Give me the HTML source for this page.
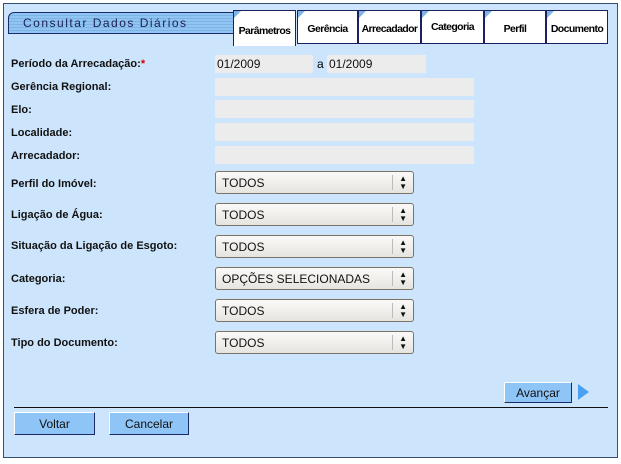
<!DOCTYPE html>
<html><head><meta charset="utf-8"><style>
*{margin:0;padding:0;box-sizing:border-box}
body{width:621px;height:464px;background:#fff;position:relative;overflow:hidden;font-family:"Liberation Sans",sans-serif}
.frame{position:absolute;left:3px;top:3px;width:615px;height:455px;background:#cce5fc;border:1px solid #354f73}
.a{position:absolute}
.title{left:8px;top:12px;width:226px;height:22px;border:1px solid #1a2a6a;border-radius:6px 0 0 0;background:repeating-linear-gradient(#90c4f2 0 2px,#7fb3e6 2px 3px);font-size:12px;letter-spacing:1.5px;color:#1a2050;padding:3px 0 0 14px}
.tab{top:10px;height:34px;background:#fff;border:1px solid #1a2060;font-size:10.5px;letter-spacing:-0.6px;font-weight:bold;color:#000;text-align:center;padding-top:12px;overflow:hidden;white-space:nowrap}
.tab:before{content:"";position:absolute;left:0;top:0;border-top:7px solid #7fb3e6;border-right:7px solid transparent}
.lbl{left:11px;font-size:11px;font-weight:bold;color:#111}
.inp{background:#ececec;height:18px;font-size:12px;padding:2px 0 0 2px;color:#111}
.sel{left:215px;width:199px;height:23px;border:1px solid #7a7468;border-radius:3px;background:linear-gradient(#fafaf8,#e6e4df);font-size:12px;padding:4px 0 0 6px;color:#111}
.sel:after{content:"";position:absolute;right:20px;top:3px;height:15px;border-left:1px solid #bbb}
.sel i{position:absolute;right:6px;top:3px;font-style:normal;font-size:8px;line-height:8px}
.btn{background:#8ec4f6;border:1px solid;border-color:#fff #1a2a6a #1a2a6a #fff;font-size:12px;color:#111;text-align:center}
</style></head><body>
<div class="frame"></div>
<div class="a title">Consultar Dados Diários</div>
<div class="a tab" style="left:233px;width:63px;height:36px;border-bottom:none;padding-top:14px">Parâmetros</div>
<div class="a tab" style="left:297px;width:61px">Gerência</div>
<div class="a tab" style="left:358px;width:63px">Arrecadador</div>
<div class="a tab" style="left:421px;width:63px;padding-top:10px">Categoria</div>
<div class="a tab" style="left:484px;width:62px">Perfil</div>
<div class="a tab" style="left:546px;width:62px">Documento</div>

<div class="a lbl" style="top:58px">Período da Arrecadação:<span style="color:#d00">*</span></div>
<div class="a lbl" style="top:81px">Gerência Regional:</div>
<div class="a lbl" style="top:104px">Elo:</div>
<div class="a lbl" style="top:127px">Localidade:</div>
<div class="a lbl" style="top:150px">Arrecadador:</div>
<div class="a lbl" style="top:178px">Perfil do Imóvel:</div>
<div class="a lbl" style="top:209px">Ligação de Água:</div>
<div class="a lbl" style="top:240px">Situação da Ligação de Esgoto:</div>
<div class="a lbl" style="top:273px">Categoria:</div>
<div class="a lbl" style="top:305px">Esfera de Poder:</div>
<div class="a lbl" style="top:337px">Tipo do Documento:</div>

<div class="a inp" style="left:215px;top:55px;width:98px">01/2009</div>
<div class="a" style="left:317px;top:57px;font-size:12px">a</div>
<div class="a inp" style="left:327px;top:55px;width:99px">01/2009</div>
<div class="a inp" style="left:215px;top:78px;width:259px"></div>
<div class="a inp" style="left:215px;top:100px;width:259px"></div>
<div class="a inp" style="left:215px;top:123px;width:259px"></div>
<div class="a inp" style="left:215px;top:146px;width:259px"></div>

<div class="a sel" style="top:171px">TODOS<i>▲<br>▼</i></div>
<div class="a sel" style="top:203px">TODOS<i>▲<br>▼</i></div>
<div class="a sel" style="top:235px">TODOS<i>▲<br>▼</i></div>
<div class="a sel" style="top:267px">OPÇÕES SELECIONADAS<i>▲<br>▼</i></div>
<div class="a sel" style="top:299px">TODOS<i>▲<br>▼</i></div>
<div class="a sel" style="top:331px">TODOS<i>▲<br>▼</i></div>

<div class="a btn" style="left:504px;top:382px;width:68px;height:21px;padding-top:3px">Avançar</div>
<div class="a" style="left:578px;top:384px;border-left:11px solid #4aa0f0;border-top:8px solid transparent;border-bottom:8px solid transparent"></div>
<div class="a" style="left:14px;top:407px;width:594px;height:1px;background:#111"></div>
<div class="a btn" style="left:14px;top:412px;width:81px;height:23px;padding-top:4px">Voltar</div>
<div class="a btn" style="left:109px;top:412px;width:80px;height:23px;padding-top:4px">Cancelar</div>
</body></html>
